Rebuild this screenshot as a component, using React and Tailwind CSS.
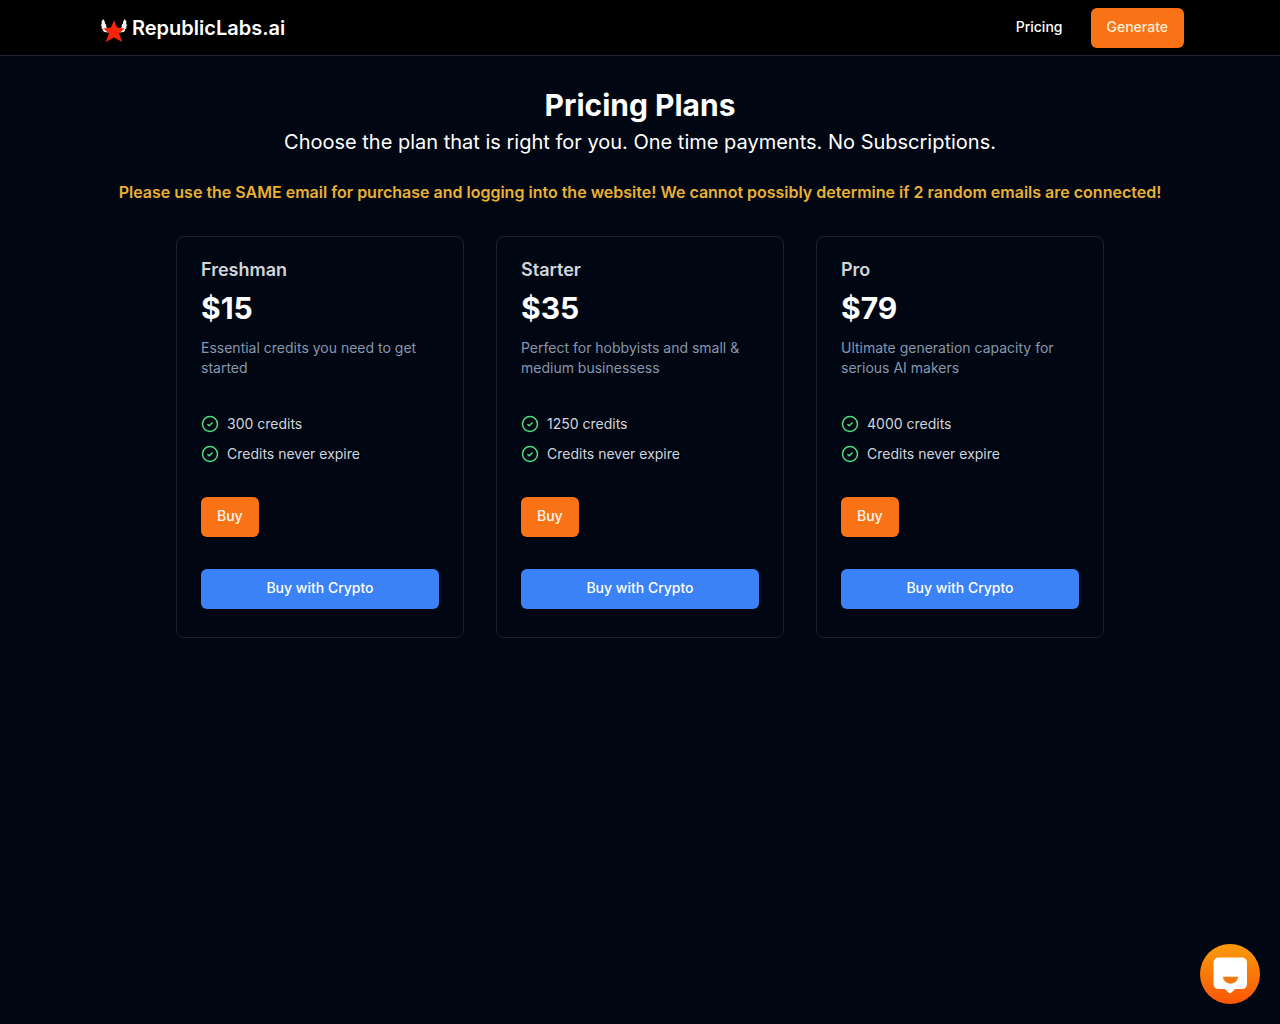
const plans = [
  {
    name: "Freshman",
    price: "$15",
    description: "Essential credits you need to get started",
    features: ["300 credits", "Credits never expire"],
  },
  {
    name: "Starter",
    price: "$35",
    description: "Perfect for hobbyists and small & medium businessess",
    features: ["1250 credits", "Credits never expire"],
  },
  {
    name: "Pro",
    price: "$79",
    description: "Ultimate generation capacity for serious AI makers",
    features: ["4000 credits", "Credits never expire"],
  },
];

function Logo() {
  return (
    <svg className="h-7 w-7" viewBox="0 0 28 28" aria-hidden="true">
      <path
        fill="#f4f4f4"
        d="M3.200 5 4.800 7.500 5 9.500 6.400 11 6 12.500 7.400 14.500 8 18.500 4.500 18 2.600 16.400 3.400 15.800 1 13.800 2.200 13.200 .6 10.800 1.800 10.400 1.600 7.500ZM24.800 5 23.200 7.500 23 9.500 21.600 11 22 12.500 20.600 14.500 20 18.500 23.500 18 25.400 16.400 24.600 15.800 27 13.800 25.800 13.200 27.400 10.800 26.200 10.400 26.400 7.500Z"
      />
      <path
        fill="#f8240c"
        d="M14 6.500 17.100 13.600 24.600 14.400 19 19.400 22.300 28 14 23.500 5.700 28 9 19.400 3.400 14.400 10.900 13.600Z"
      />
    </svg>
  );
}

function CheckIcon() {
  return (
    <svg
      className="h-[18px] w-[18px] shrink-0 text-[#4ade80]"
      viewBox="0 0 18 18"
      fill="none"
      stroke="currentColor"
      strokeWidth="1.5"
      aria-hidden="true"
    >
      <circle cx="9" cy="9" r="7.5" />
      <path d="M6.4 9.2 8.1 10.7 11.6 7.5" />
    </svg>
  );
}

function Header() {
  return (
    <header className="flex h-14 items-center justify-between border-b border-[#1c2530] bg-black px-24">
      <a href="#" className="flex items-center gap-1 pl-1 text-xl font-semibold">
        <Logo />
        RepublicLabs.ai
      </a>
      <nav className="flex items-center gap-7 text-sm font-medium">
        <a href="#pricing" className="pb-0.5">
          Pricing
        </a>
        <button className="h-10 rounded-md bg-[#f97316] px-4 pb-0.5 text-[#ffedd5]">
          Generate
        </button>
      </nav>
    </header>
  );
}

function PlanCard({ plan }) {
  return (
    <section className="rounded-lg border border-[#1a222f] px-6 pt-[21px] pb-7">
      <h2 className="text-lg leading-6 font-semibold text-[#d1d5db]">{plan.name}</h2>
      <p className="mt-2 text-3xl font-bold">{plan.price}</p>
      <p className="mt-3 text-sm text-[#8896ab]">{plan.description}</p>
      <ul className="mt-9 space-y-2.5 text-sm text-[#d1d5db]">
        {plan.features.map((feature) => (
          <li key={feature} className="flex items-center gap-2">
            <CheckIcon />
            {feature}
          </li>
        ))}
      </ul>
      <button className="mt-[33px] block h-10 rounded-md bg-[#f97316] px-4 pb-0.5 text-sm font-medium text-[#fff7ed]">
        Buy
      </button>
      <button className="mt-8 block h-10 w-full rounded-md bg-[#3b82f6] px-4 pb-0.5 text-sm font-medium">
        Buy with Crypto
      </button>
    </section>
  );
}

function ChatButton() {
  return (
    <button aria-label="Open chat" className="fixed right-5 bottom-5 h-15 w-15 rounded-full">
      <svg className="h-15 w-15" viewBox="0 0 60 60" aria-hidden="true">
        <defs>
          <linearGradient id="chat-bg" x1="0" y1="0" x2="0" y2="1">
            <stop offset="0" stopColor="#f99b08" />
            <stop offset="1" stopColor="#fb5607" />
          </linearGradient>
        </defs>
        <circle cx="30" cy="30" r="30" fill="url(#chat-bg)" />
        <path
          fill="#fff"
          d="M19 13.500H41.500Q47 13.500 47 19V39.500Q47 45 41.500 45H35L31.500 48.500Q30 49.800 28.500 48.500L25 45H19Q13.500 45 13.500 39.500V19Q13.500 13.500 19 13.500Z"
        />
        <path
          fill="#f5790d"
          d="M23.600 32.800H37.400Q38.200 32.800 38 33.800A7.600 7 0 0 1 23 33.800Q22.800 32.800 23.600 32.800Z"
        />
      </svg>
    </button>
  );
}

export default function App() {
  return (
    <div className="min-h-screen bg-[#000713] font-['Inter',sans-serif] text-white">
      <Header />
      <main className="px-24 pt-[31px] pb-16">
        <div className="text-center">
          <h1 className="text-3xl font-bold">Pricing Plans</h1>
          <p className="mt-[5px] text-xl">
            Choose the plan that is right for you. One time payments. No Subscriptions.
          </p>
          <p className="mt-6 font-semibold text-[#eab035]">
            Please use the SAME email for purchase and logging into the website! We cannot possibly
            determine if 2 random emails are connected!
          </p>
        </div>
        <div id="pricing" className="mx-auto mt-8 grid max-w-[928px] gap-8 md:grid-cols-3">
          {plans.map((plan) => (
            <PlanCard key={plan.name} plan={plan} />
          ))}
        </div>
      </main>
      <ChatButton />
    </div>
  );
}
